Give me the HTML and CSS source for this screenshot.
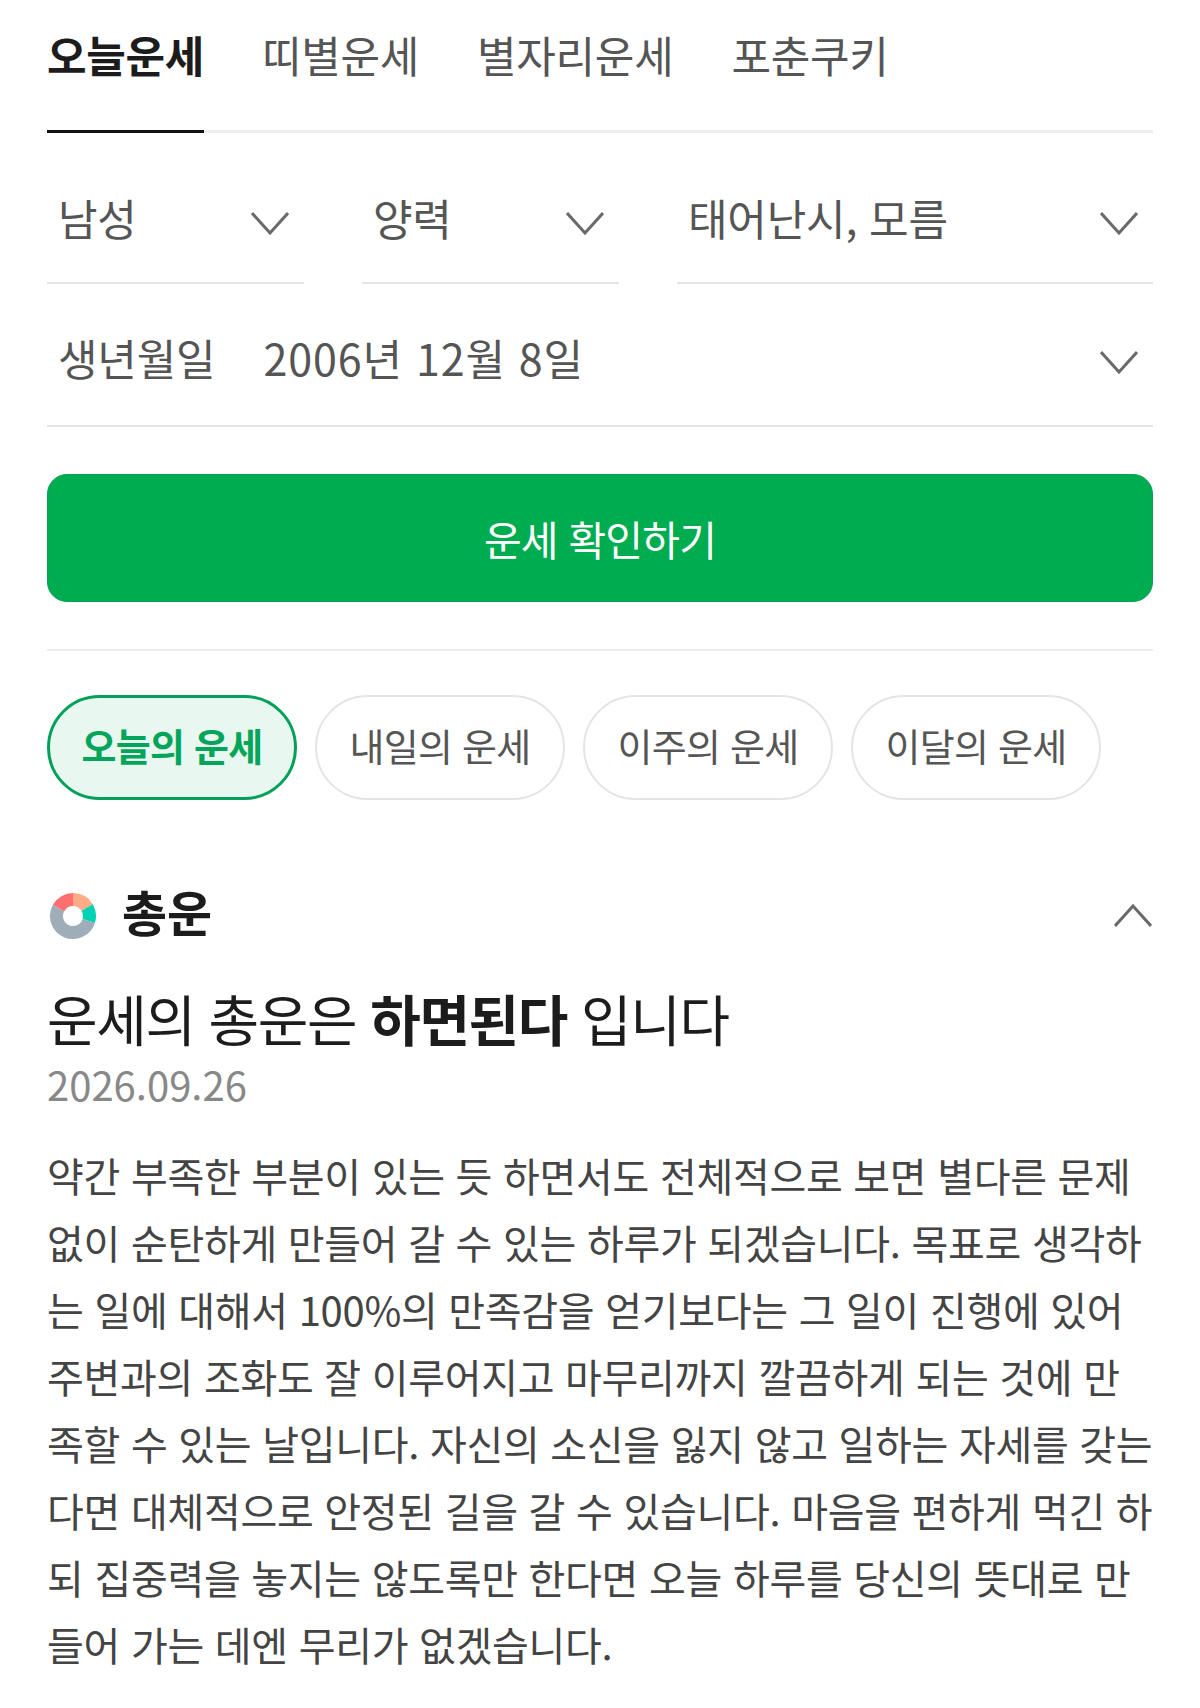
FILE: index.html
```html
<!DOCTYPE html>
<html lang="ko">
<head>
    <meta charset="UTF-8">
    <meta name="viewport" content="width=device-width, initial-scale=1.0">
    <title>오늘운세</title>
    <link rel="stylesheet" href="styles.css">
</head>
<body>
    <div class="page">
        <nav class="tabs">
            <a class="tab active">오늘운세</a>
            <a class="tab">띠별운세</a>
            <a class="tab">별자리운세</a>
            <a class="tab">포춘쿠키</a>
        </nav>

        <div class="selects">
            <div class="select">
                <span>남성</span>
                <svg class="chevron" viewBox="0 0 38 24"><path d="M1 2 L19 22 L37 2"/></svg>
            </div>
            <div class="select">
                <span>양력</span>
                <svg class="chevron" viewBox="0 0 38 24"><path d="M1 2 L19 22 L37 2"/></svg>
            </div>
            <div class="select">
                <span>태어난시, 모름</span>
                <svg class="chevron" viewBox="0 0 38 24"><path d="M1 2 L19 22 L37 2"/></svg>
            </div>
        </div>

        <div class="select birth">
            <span class="birth-label">생년월일</span>
            <span class="birth-value">2006년 12월 8일</span>
            <svg class="chevron" viewBox="0 0 38 24"><path d="M1 2 L19 22 L37 2"/></svg>
        </div>

        <button class="submit">운세 확인하기</button>

        <div class="chips">
            <a class="chip active">오늘의 운세</a>
            <a class="chip">내일의 운세</a>
            <a class="chip">이주의 운세</a>
            <a class="chip">이달의 운세</a>
        </div>

        <section class="fortune">
            <div class="fortune-head">
                <svg class="donut" viewBox="0 0 48 48">
                    <path stroke="#9fadb8" d="M39.78 28.82 A16.5 16.5 0 1 1 9.57 16"/>
                    <path stroke="#ff6f6f" d="M9.57 16 A16.5 16.5 0 0 1 24 7.5"/>
                    <path stroke="#ffab87" d="M24 7.5 A16.5 16.5 0 0 1 38.14 15.5"/>
                    <path stroke="#00d2b4" d="M38.14 15.5 A16.5 16.5 0 0 1 39.78 28.82"/>
                </svg>
                <h2>총운</h2>
                <svg class="chevron up" viewBox="0 0 38 24"><path d="M1 22 L19 2 L37 22"/></svg>
            </div>
            <h3>운세의 총운은 <b>하면된다</b> 입니다</h3>
            <div class="date">2026.09.26</div>
            <p class="text">약간 부족한 부분이 있는 듯 하면서도 전체적으로 보면 별다른 문제<br>없이 순탄하게 만들어 갈 수 있는 하루가 되겠습니다. 목표로 생각하<br>는 일에 대해서 100%의 만족감을 얻기보다는 그 일이 진행에 있어<br>주변과의 조화도 잘 이루어지고 마무리까지 깔끔하게 되는 것에 만<br>족할 수 있는 날입니다. 자신의 소신을 잃지 않고 일하는 자세를 갖는<br>다면 대체적으로 안정된 길을 갈 수 있습니다. 마음을 편하게 먹긴 하<br>되 집중력을 놓지는 않도록만 한다면 오늘 하루를 당신의 뜻대로 만<br>들어 가는 데엔 무리가 없겠습니다.</p>
        </section>
    </div>
</body>
</html>
```

FILE: styles.css
```css
* {
    box-sizing: border-box;
}
body {
    margin: 0;
    background-color: #fff;
    color: #1c1c1c;
    font-family: "Noto Sans CJK KR", "Noto Sans", sans-serif;
}
.page {
    padding: 0 47px;
}
.tabs {
    display: flex;
    gap: 58px;
    height: 133px;
    border-bottom: 3px solid #eee;
}
.tab {
    height: 133px;
    padding-top: 23px;
    border-bottom: 3px solid transparent;
    font-size: 43px;
    line-height: 62px;
    letter-spacing: -0.3px;
    color: #555;
}
.tab.active {
    border-bottom-color: #111;
    font-weight: 700;
    color: #1c1c1c;
}
.selects {
    display: grid;
    grid-template-columns: 257px 257px 1fr;
    gap: 58px;
}
.select {
    display: flex;
    align-items: center;
    justify-content: space-between;
    height: 151px;
    padding: 18px 15px 0 11px;
    border-bottom: 2px solid #e4e4e4;
    font-size: 43px;
    letter-spacing: -0.2px;
    color: #555;
}
.chevron {
    flex: none;
    width: 38px;
    height: 24px;
    margin-top: 12px;
    fill: none;
    stroke: #6a6a6a;
    stroke-width: 3;
}
.birth {
    height: 143px;
    padding-top: 4px;
    justify-content: flex-start;
    gap: 48px;
}
.birth-value {
    letter-spacing: 0.9px;
}
.birth .chevron {
    margin-top: 10px;
    margin-left: auto;
}
.submit {
    display: block;
    width: 100%;
    height: 128px;
    margin-top: 47px;
    padding-bottom: 2px;
    border: 1px solid #0a9d57;
    border-radius: 20px;
    background-color: #00ac50;
    color: #fff;
    font-family: inherit;
    font-size: 41px;
    letter-spacing: -0.8px;
}
.chips {
    display: flex;
    gap: 18px;
    margin-top: 47px;
    padding-top: 44px;
    border-top: 2px solid #eee;
}
.chip {
    display: flex;
    align-items: center;
    justify-content: center;
    width: 250px;
    height: 105px;
    padding-bottom: 7px;
    border: 2px solid #e4e4e4;
    border-radius: 53px;
    font-size: 38px;
    letter-spacing: -0.7px;
    color: #555;
}
.chip.active {
    border: 3px solid #03a05c;
    background-color: #e8f7ef;
    color: #03a55a;
    font-weight: 700;
}
.fortune {
    margin-top: 85px;
}
.fortune-head {
    display: flex;
    align-items: center;
    height: 62px;
}
.donut {
    width: 48px;
    height: 48px;
    margin-left: 2px;
    fill: none;
    stroke-width: 13;
}
.fortune-head h2 {
    margin: 0 0 12px 25px;
    font-size: 49px;
    font-weight: 700;
}
.fortune-head .chevron {
    margin-top: 0;
    margin-left: auto;
    margin-right: 1px;
}
.fortune h3 {
    margin: 30px 0 0;
    font-size: 55px;
    font-weight: 400;
    line-height: 80px;
    letter-spacing: -1.4px;
}
.date {
    margin-top: 0;
    font-size: 40px;
    line-height: 54px;
    color: #888;
}
.text {
    margin: 31px 0 0;
    font-size: 40px;
    line-height: 67px;
    letter-spacing: -0.3px;
    color: #444;
    white-space: nowrap;
}
```
